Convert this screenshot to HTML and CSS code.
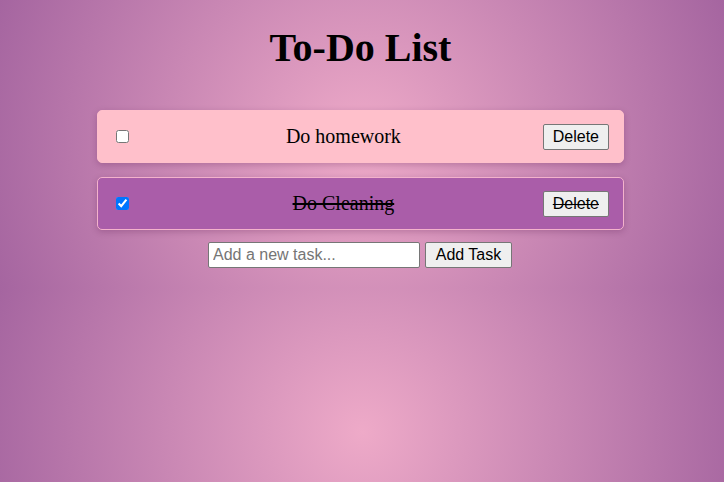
FILE: index.html
```html
<!DOCTYPE html>
<html lang="en">
<head>
<meta charset="utf-8">
<title>To-Do List</title>
<link rel="stylesheet" href="styles.css">
</head>
<body>
  <main class="app">
    <h1 class="title">To-Do List</h1>
    <ul class="tasks">
      <li class="task">
        <input type="checkbox" class="task-check">
        <span class="task-text">Do homework</span>
        <button class="btn">Delete</button>
      </li>
      <li class="task completed">
        <input type="checkbox" class="task-check" checked>
        <span class="task-text">Do Cleaning</span>
        <button class="btn">Delete</button>
      </li>
    </ul>
    <div class="add-row">
      <input type="text" class="task-input" placeholder="Add a new task...">
      <button class="btn btn-add">Add Task</button>
    </div>
  </main>
</body>
</html>
```

FILE: styles.css
```css
html {
  background: radial-gradient(circle, #eeaac8, #a565a0);
  background-size: 100% 288px;
  background-repeat: repeat;
}

body {
  margin: 0;
  padding: 25px 3px 20px 0;
  font-family: "Liberation Serif", "Times New Roman", serif;
  color: #000;
}

.app {
  display: flex;
  flex-direction: column;
  align-items: center;
}

.title {
  margin: 0 0 39px;
  font-size: 40px;
  line-height: 46px;
  font-weight: bold;
  text-align: center;
}

.tasks {
  list-style: none;
  margin: 0;
  padding: 0;
  width: 527px;
  display: flex;
  flex-direction: column;
  gap: 14px;
}

.task {
  box-sizing: border-box;
  height: 53px;
  display: flex;
  align-items: center;
  padding: 0 14px;
  background: #ffc0cb;
  border: 1px solid #ffc0cb;
  border-radius: 5px;
  box-shadow: 0 2px 6px rgba(80, 20, 70, 0.25);
  font-size: 20px;
}

.task.completed {
  background: #aa5da9;
  border-color: #f4b2cc;
  text-decoration: line-through;
}

.task-check {
  width: 13px;
  height: 13px;
  margin: 3px 3px 3px 4px;
}

.task-text {
  flex: 1;
  margin-left: 12px;
  text-align: center;
}

.btn {
  box-sizing: border-box;
  height: 26px;
  padding: 0 9px;
  font-family: "Liberation Sans", Arial, sans-serif;
  font-size: 16px;
  line-height: 24px;
  color: #000;
  background: #efefef;
  border: 1px solid #767676;
  border-radius: 2px;
}

.btn-add {
  width: 87px;
}

.add-row {
  margin-top: 12px;
  margin-right: 1px;
  display: flex;
  gap: 5px;
}

.task-input {
  box-sizing: border-box;
  width: 212px;
  height: 26px;
  padding: 0 4px;
  font-family: "Liberation Sans", Arial, sans-serif;
  font-size: 16px;
  background: #fff;
  border: 1px solid #767676;
  border-radius: 2px;
}

.task-input::placeholder {
  color: #757575;
}
```
